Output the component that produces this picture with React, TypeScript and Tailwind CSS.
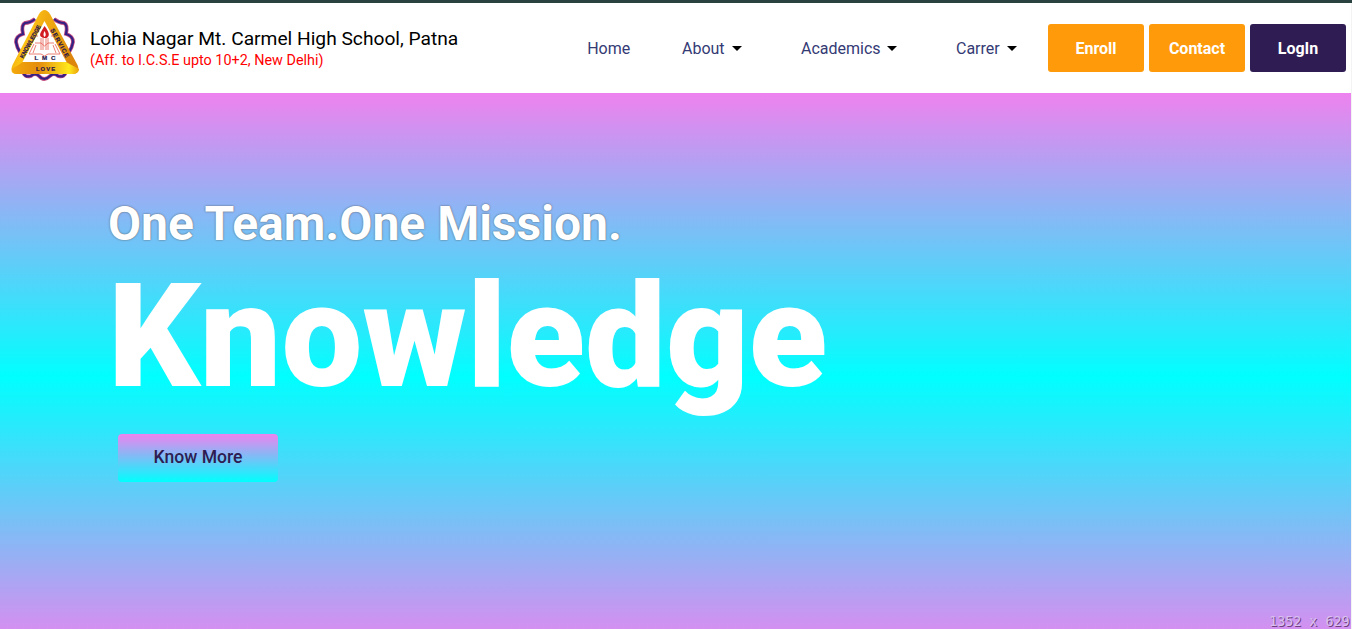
import React from "react";

const ribbon =
  "M25 10 Q20 14 15 14 Q11 16 13 25 Q6 27 6 33 Q7 39 10 43 M44 10 Q49 14 54 14 Q58 16 56 25 Q63 27 63 33 Q62 39 59 43 M13 62 Q14 69 21 67 Q25 63 29 67 Q34 73 40 67 Q44 63 48 67 Q55 69 56 62";

function Emblem() {
  return (
    <svg className="block h-[74px] w-[70px] shrink-0" viewBox="0 0 70 74">
      <defs>
        <linearGradient id="gold" x1="0" y1="0" x2="1" y2="0.25">
          <stop offset="0" stopColor="#e8940f" />
          <stop offset="0.3" stopColor="#fbc414" />
          <stop offset="0.5" stopColor="#f2ad12" />
          <stop offset="0.75" stopColor="#eaa00f" />
          <stop offset="1" stopColor="#dc860d" />
        </linearGradient>
        <linearGradient id="base" x1="0" y1="0" x2="1" y2="0">
          <stop offset="0" stopColor="#f3a80c" />
          <stop offset="0.4" stopColor="#e48d0d" />
          <stop offset="0.85" stopColor="#ffe91c" />
          <stop offset="1" stopColor="#e9a00d" />
        </linearGradient>
      </defs>
      <path d={ribbon} fill="none" stroke="#c04a80" strokeWidth="3.8" />
      <path d={ribbon} fill="none" stroke="#332184" strokeWidth="2.2" />
      <path d="M29 5 Q34.5 -3 40 5 L67.5 56 Q71 65 62 65 H7 Q-1 65 2.5 56Z" fill="url(#gold)" />
      <path d="M13 53 H56 L69 60 Q69 65 62 65 H7 Q2 65 2 60Z" fill="url(#base)" />
      <path d="M34.5 12 L56.5 53 H12.5Z" fill="#fff" />
      <g fill="none" stroke="#e65d50" strokeWidth="0.8">
        <path d="M31 29 V41 M38 29 V41 M33 28 V41 M36 28 V41 M25 34 H31 L34.5 37 L38 34 H44 M24 35 L19 45 H31 L34.5 47 L38 45 H50 L45 35 M26 36 L23 44 M43 36 L46 44 M29 23 L27 20 M40 23 L42 20 M28 27 H25 M41 27 H44" />
      </g>
      <path d="M34.5 17 Q42 26 36.5 29 Q27 29 31.5 22Z" fill="#d21c22" />
      <path d="M34.5 22 Q37 26 34.5 28 Q32.5 26 34.5 22Z" fill="#fff" />
      <g fill="#28164a" stroke="#28164a" strokeWidth="0.2" fontFamily="Liberation Sans, sans-serif" fontWeight="700">
        <text x="24.5" y="50.5" fontSize="6.2" textLength="21" lengthAdjust="spacing">LMC</text>
        <text x="26" y="61.5" fontSize="5.8" textLength="19" lengthAdjust="spacing">LOVE</text>
        <text transform="translate(13.2 49.8) rotate(-61)" fontSize="6" textLength="37" lengthAdjust="spacingAndGlyphs">KNOWLEDGE</text>
        <text transform="translate(40.3 21) rotate(61)" fontSize="6" textLength="32" lengthAdjust="spacing">SERVICE</text>
      </g>
    </svg>
  );
}

function Caret() {
  return (
    <svg className="mb-[2px] h-[5px] w-[10px]" viewBox="0 0 10 5">
      <path d="M0 0H10L5 5Z" fill="#000" />
    </svg>
  );
}

export default function App() {
  return (
    <div className="h-[629px] w-full overflow-hidden bg-[#f3f3f3] pr-px font-['Roboto',sans-serif]">
      <div className="-mr-px h-[3px] bg-[#29423f]" />
      <header className="flex h-[90px] bg-white">
        <div className="flex w-[587px] pl-[10px] pt-[6px]">
          <Emblem />
          <div className="ml-[10px] pt-4">
            <p className="whitespace-nowrap text-[19.2px] leading-[28px] text-black">Lohia Nagar Mt. Carmel High School, Patna</p>
            <p className="-mt-px text-[14.4px] leading-[18px] text-[#ff0000]">(Aff. to I.C.S.E upto 10+2, New Delhi)</p>
          </div>
        </div>
        <nav className="flex h-full w-[461px] items-center pt-[2px] text-base text-[#343a74]">
          <a className="w-[95px] pl-[0.2px]">Home</a>
          <a className="flex w-[119px] items-center gap-[7px]">About <Caret /></a>
          <a className="flex w-[155px] items-center gap-[6px]">Academics <Caret /></a>
          <a className="flex items-center gap-[7px]">Carrer <Caret /></a>
        </nav>
        <div className="flex items-center gap-[5px] text-base font-bold text-white">
          <button className="h-12 w-24 rounded-[3px] bg-[#ff9b0b] pt-[2px]">Enroll</button>
          <button className="h-12 w-24 rounded-[3px] bg-[#ff9b0b] pt-[2px]">Contact</button>
          <button className="h-12 w-24 rounded-[3px] bg-[#2e1c52] pt-[2px]">LogIn</button>
        </div>
      </header>
      <main className="relative h-[536px] bg-[linear-gradient(to_bottom,#ee82ee_0px,#00ffff_284px,#ee82ee_568px)] pl-[108px] pt-[95px] text-white">
        <h2 className="h-[65px] whitespace-nowrap text-[48px] font-bold leading-[72px] [text-shadow:0_0_2px_#555]">One Team.One Mission.</h2>
        <h1 className="h-[168px] text-[144px] font-black leading-[168px]">Knowledge</h1>
        <button className="ml-[10px] mt-[13px] block h-12 w-40 rounded-[4px] bg-[linear-gradient(to_bottom,#ee82ee,#00ffff)] pb-[2px] text-[17.6px] font-medium text-[#2e1c52]">Know More</button>
        <span className="absolute bottom-[-2px] right-[1.5px] font-['DejaVu_Sans_Mono',monospace] text-[13.33px] leading-[18px] text-[#d8c0f0] [text-shadow:1px_1px_0_#704080]">1352 x 629</span>
      </main>
    </div>
  );
}
